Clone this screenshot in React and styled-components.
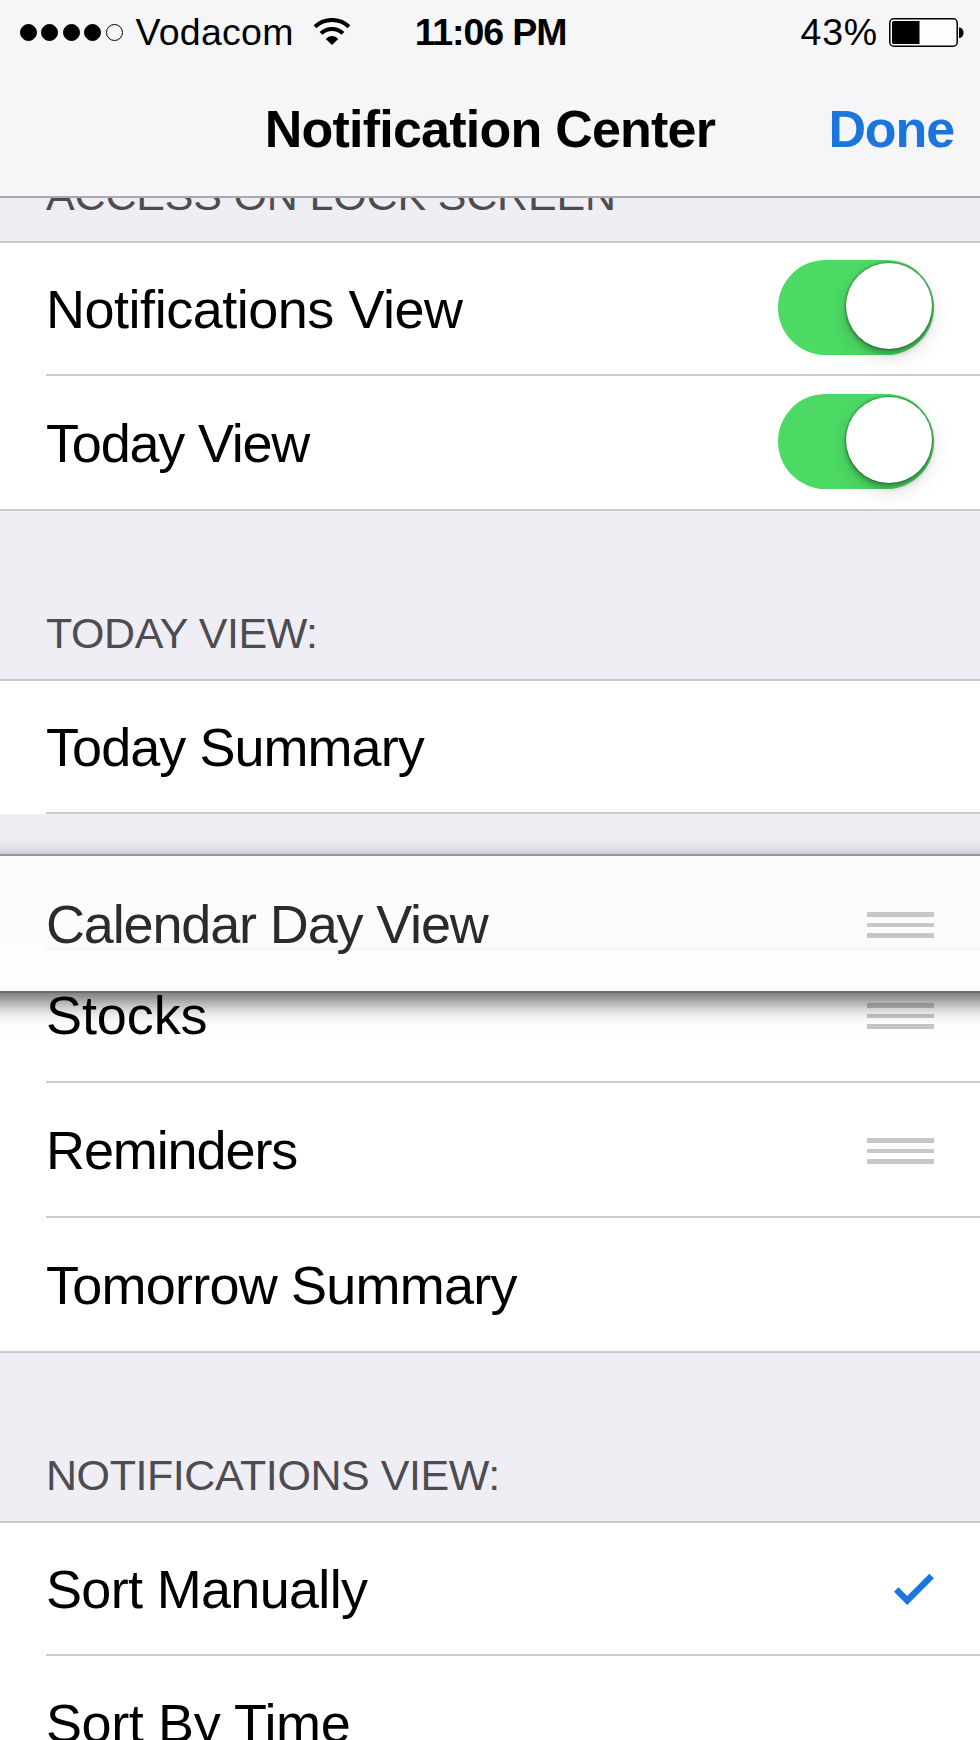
import React from "react";
import styled, { createGlobalStyle } from "styled-components";

const GlobalStyle = createGlobalStyle`
  * { box-sizing: border-box; }
  html, body { margin: 0; padding: 0; overflow: hidden; }
  body { background: #f0eef5; }
`;

const Screen = styled.main`
  width: 980px;
  height: 1740px;
  overflow: hidden;
  background: #f0eef5;
  color: #000;
  font-family: "Liberation Sans", Arial, Helvetica, sans-serif;
`;

const Header = styled.header`
  height: 198px;
  background: #f6f6f8;
  border-bottom: 2px solid #a9a9ae;
`;

const StatusBar = styled.div`
  display: grid;
  grid-template-columns: 1fr auto 1fr;
  align-items: center;
  height: 64px;
  padding: 0 16px 0 20px;
  font-size: 37.5px;
  line-height: 44px;
  white-space: nowrap;
`;

const StatusSide = styled.div`
  display: flex;
  align-items: center;
  justify-content: ${(p) => (p.$end ? "flex-end" : "flex-start")};
`;

const Signal = styled.div`
  display: flex;
  gap: 4.4px;
  margin-right: 13px;
`;

const Dot = styled.span`
  width: 17px;
  height: 17px;
  border-radius: 50%;
  border: 1.3px solid #000;
  background: ${(p) => (p.$filled ? "#000" : "transparent")};
`;

const Carrier = styled.span`
  margin-right: 19px;
  letter-spacing: ${(p) => p.$spacing}px;
`;

const Time = styled.span`
  margin-right: 3px;
  font-weight: 700;
  letter-spacing: ${(p) => p.$spacing}px;
`;

const Percent = styled.span`
  margin-right: 11px;
  letter-spacing: ${(p) => p.$spacing}px;
`;

const NavBar = styled.div`
  display: grid;
  grid-template-columns: 1fr auto 1fr;
  align-items: center;
  height: 130px;
  padding: 0 26px;
  font-size: 52px;
  font-weight: 700;
  line-height: 60px;
  white-space: nowrap;
`;

const Title = styled.h1`
  grid-column: 2;
  margin: 0;
  font-size: inherit;
  font-weight: inherit;
  letter-spacing: ${(p) => p.$spacing}px;
`;

const DoneButton = styled.button`
  justify-self: end;
  padding: 0;
  border: 0;
  background: none;
  color: #1a76dc;
  font: inherit;
  letter-spacing: ${(p) => p.$spacing}px;
`;

const SectionTitle = styled.h2`
  display: flex;
  align-items: flex-end;
  height: ${(p) => (p.$clipped ? 43 : 168)}px;
  margin: 0;
  padding: 0 0 21px 46px;
  overflow: hidden;
  color: #4d4c52;
  font-size: 43px;
  font-weight: 400;
  line-height: 50px;
  letter-spacing: ${(p) => p.$spacing}px;
  white-space: nowrap;
`;

const Group = styled.section`
  position: relative;
  border-top: 2px solid #c9c8cc;
`;

const Row = styled.div`
  height: ${(p) => (p.$first ? 133 : 135)}px;
  padding-left: ${(p) => (p.$last ? 0 : 46)}px;
  background: #fff;
`;

const RowBody = styled.div`
  display: flex;
  align-items: center;
  justify-content: space-between;
  height: 100%;
  padding-left: ${(p) => (p.$last ? 46 : 0)}px;
  padding-right: 46px;
  border-bottom: 2px solid #cbcbcd;
`;

const Label = styled.span`
  font-size: 54px;
  line-height: 60px;
  letter-spacing: ${(p) => p.$spacing}px;
  white-space: nowrap;
`;

const EmptySlot = styled.div`
  height: 134px;
`;

/* Runs past both screen edges so that its shadow is even across the width. */
const LiftedRow = styled.div`
  position: absolute;
  z-index: 1;
  top: 173px;
  left: -40px;
  right: -40px;
  display: flex;
  align-items: center;
  justify-content: space-between;
  height: 139px;
  padding: 0 86px;
  background:
    linear-gradient(#f3f3f3, #f3f3f3) 86px 92px / 100% 2px no-repeat,
    linear-gradient(#fcfcfc 92px, #fefefe 92px);
  color: #2b2b2c;
  border-top: 2px solid #96969b;
  border-bottom: 2px solid #6b6b6b;
  box-shadow: 0 9px 22px rgba(0, 0, 0, 0.62);
`;

const Track = styled.div`
  width: 156px;
  height: 95px;
  margin-bottom: 2px;
  padding: 3px 2.5px;
  display: flex;
  justify-content: flex-end;
  border-radius: 48px;
  background: #4cd964;
`;

const Knob = styled.div`
  width: 86px;
  height: 86px;
  border-radius: 50%;
  background: #fff;
  box-shadow: 0 0 2px 1px rgba(0, 0, 0, 0.3), 0 5px 5px rgba(0, 0, 0, 0.22),
    0 8px 20px rgba(0, 0, 0, 0.13);
`;

const Handle = styled.div`
  display: grid;
  gap: 6px;
  width: 67px;
  margin-top: 3px;
`;

const Bar = styled.span`
  height: 4.8px;
  background: #c7c7ca;
`;

function Switch() {
  return (
    <Track role="switch" aria-checked="true">
      <Knob />
    </Track>
  );
}

function Grip() {
  return (
    <Handle>
      <Bar />
      <Bar />
      <Bar />
    </Handle>
  );
}

function Wifi() {
  return (
    <svg width="38" height="28" viewBox="0 0 38 28" fill="none" stroke="#000">
      <path d="M2 8.7C11.5 -0.3 26.5 -0.3 36 8.7" strokeWidth="4" />
      <path d="M8 15.4C14.2 9.4 23.8 9.4 30 15.4" strokeWidth="4" />
      <path d="M12.8 21C16.2 17 21.8 17 25.2 21L19 27Z" fill="#000" stroke="none" />
    </svg>
  );
}

function Battery() {
  return (
    <svg width="75" height="29" viewBox="0 0 75 29">
      <rect x="0.8" y="0.8" width="67.4" height="27.4" rx="4" fill="#fdfdfd" stroke="#000" strokeWidth="1.5" />
      <path d="M4.5 3H30.5V26H4.5Q3 26 3 24.5V4.5Q3 3 4.5 3Z" />
      <path d="M70 9.5C76 9.5 76 20 70 20Z" />
    </svg>
  );
}

function Check() {
  return (
    <svg width="40" height="32" viewBox="0 0 40 32" fill="none" stroke="#1a76dc" strokeWidth="6.4">
      <path d="M2.2 16.5L13.2 27.5L37.6 3" />
    </svg>
  );
}

function ListRow({ label, spacing, first, last, children }) {
  return (
    <Row $first={first} $last={last}>
      <RowBody $last={last}>
        <Label $spacing={spacing}>{label}</Label>
        {children}
      </RowBody>
    </Row>
  );
}

export default function App() {
  return (
    <Screen>
      <GlobalStyle />
      <Header>
        <StatusBar>
          <StatusSide>
            <Signal>
              <Dot $filled />
              <Dot $filled />
              <Dot $filled />
              <Dot $filled />
              <Dot />
            </Signal>
            <Carrier $spacing={0.25}>Vodacom</Carrier>
            <Wifi />
          </StatusSide>
          <Time $spacing={-1.1}>11:06 PM</Time>
          <StatusSide $end>
            <Percent $spacing={0.8}>43%</Percent>
            <Battery />
          </StatusSide>
        </StatusBar>
        <NavBar>
          <Title $spacing={-0.77}>Notification Center</Title>
          <DoneButton $spacing={-1.1}>Done</DoneButton>
        </NavBar>
      </Header>

      <SectionTitle $clipped $spacing={-0.17}>ACCESS ON LOCK SCREEN</SectionTitle>
      <Group>
        <ListRow first label="Notifications View" spacing={-0.48}>
          <Switch />
        </ListRow>
        <ListRow last label="Today View" spacing={-1.2}>
          <Switch />
        </ListRow>
      </Group>

      <SectionTitle $spacing={-0.44}>TODAY VIEW:</SectionTitle>
      <Group>
        <ListRow first label="Today Summary" spacing={-0.95} />
        <EmptySlot />
        <ListRow label="Stocks" spacing={-0.1}>
          <Grip />
        </ListRow>
        <ListRow label="Reminders" spacing={-1.1}>
          <Grip />
        </ListRow>
        <ListRow last label="Tomorrow Summary" spacing={-0.77} />
        <LiftedRow>
          <Label $spacing={-1.15}>Calendar Day View</Label>
          <Grip />
        </LiftedRow>
      </Group>

      <SectionTitle $spacing={-0.43}>NOTIFICATIONS VIEW:</SectionTitle>
      <Group>
        <ListRow first label="Sort Manually" spacing={-0.68}>
          <Check />
        </ListRow>
        <ListRow label="Sort By Time" spacing={-0.4} />
      </Group>
    </Screen>
  );
}
